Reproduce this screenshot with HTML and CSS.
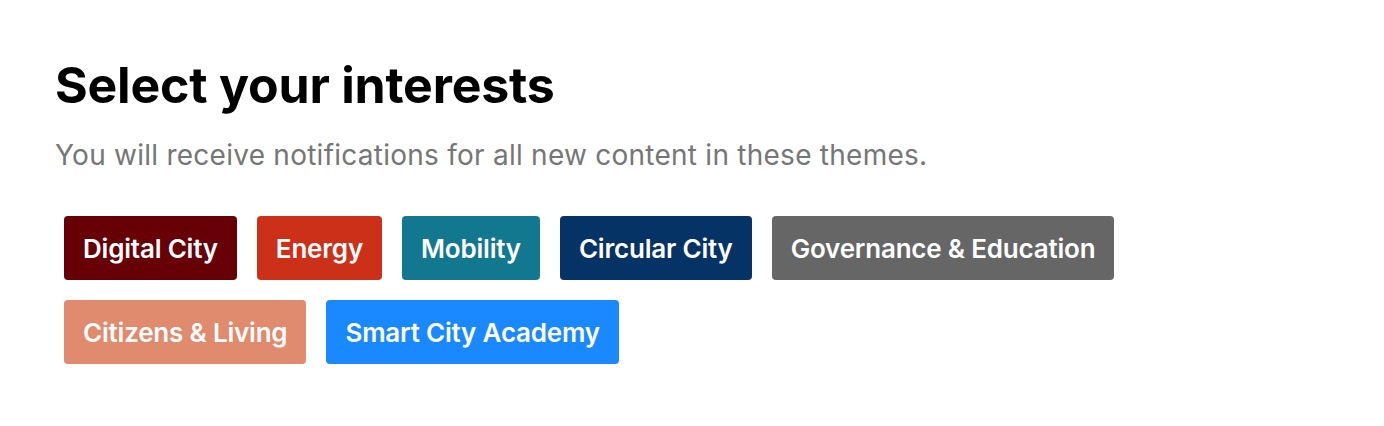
FILE: index.html
```html
<!DOCTYPE html>
<html lang="en">
<head>
    <meta charset="UTF-8">
    <meta name="viewport" content="width=device-width, initial-scale=1.0">
    <title>Select your interests</title>
    <link rel="stylesheet" href="styles.css">
</head>
<body>
    <main class="interests">
        <h1 class="title">Select your interests</h1>
        <p class="subtitle">You will receive notifications for all new content in these themes.</p>

        <div class="themes">
            <button class="theme digital">Digital City</button>
            <button class="theme energy">Energy</button>
            <button class="theme mobility">Mobility</button>
            <button class="theme circular">Circular City</button>
            <button class="theme governance">Governance &amp; Education</button>
            <button class="theme citizens">Citizens &amp; Living</button>
            <button class="theme academy">Smart City Academy</button>
        </div>
    </main>
</body>
</html>
```

FILE: styles.css
```css
body {
    margin: 0;
    padding: 0;
    background-color: #fff;
    font-family: Inter, "Noto Sans", sans-serif;
}

.interests {
    padding: 55px 55px 0 55px;
}

.title {
    margin: 0;
    font-size: 50px;
    line-height: 60px;
    font-weight: 700;
    letter-spacing: -0.2px;
    color: #000;
}

.subtitle {
    margin: 22px 0 0 0;
    font-size: 28px;
    line-height: 36px;
    font-weight: 400;
    letter-spacing: 0.25px;
    color: #767676;
}

.themes {
    display: flex;
    flex-wrap: wrap;
    gap: 20px;
    max-width: 1100px;
    margin-top: 43px;
    padding-left: 9px;
}

.theme {
    height: 64px;
    padding: 0 19px;
    border: none;
    border-radius: 4px;
    font-family: inherit;
    font-size: 26px;
    font-weight: 600;
    letter-spacing: -0.2px;
    color: #fff;
    cursor: pointer;
}

.digital { background-color: #660006; }
.energy { background-color: #cc3018; }
.mobility { background-color: #12788f; }
.circular { background-color: #063366; }
.governance { background-color: #666666; }
.citizens { background-color: #e08a6e; }
.academy { background-color: #1a88ff; }
```
